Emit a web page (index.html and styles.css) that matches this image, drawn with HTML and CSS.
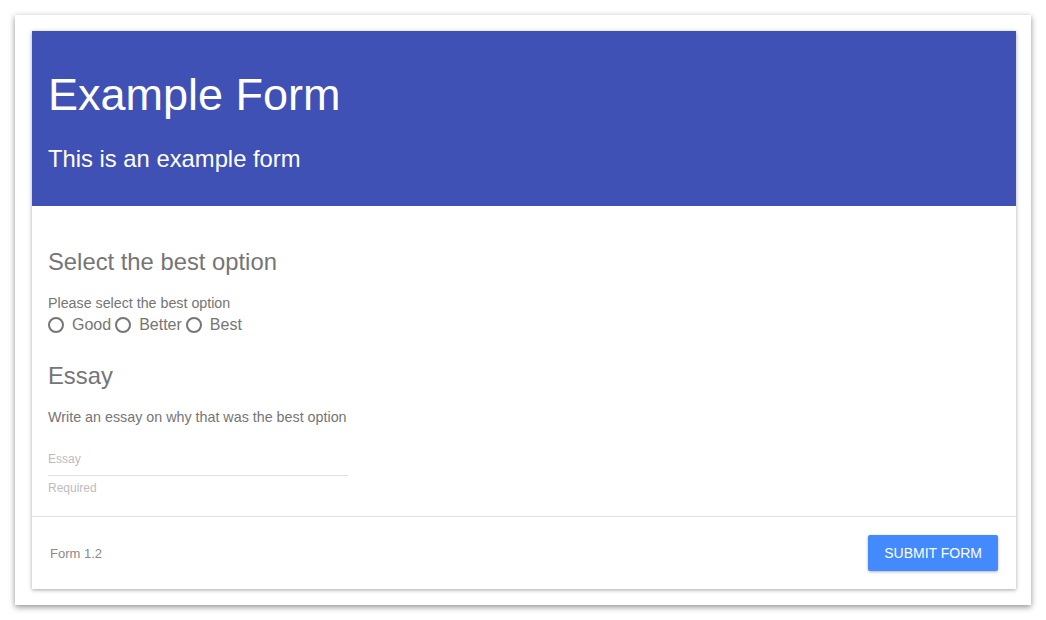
FILE: index.html
```html
<!DOCTYPE html>
<html>
<head>
<meta charset="utf-8">
<link rel="stylesheet" href="styles.css">
</head>
<body>
<div class="frame">
  <div class="card">
    <header class="head">
      <h1 class="title">Example Form</h1>
      <p class="subtitle">This is an example form</p>
    </header>
    <main class="body">
      <section class="sec">
        <h2 class="sec-title">Select the best option</h2>
        <div class="label">Please select the best option</div>
        <div class="radios">
          <label class="radio"><span class="dot"></span>Good</label>
          <label class="radio"><span class="dot"></span>Better</label>
          <label class="radio"><span class="dot"></span>Best</label>
        </div>
      </section>
      <section class="sec">
        <h2 class="sec-title">Essay</h2>
        <div class="desc">Write an essay on why that was the best option</div>
        <div class="field">
          <div class="placeholder">Essay</div>
          <div class="hint">Required</div>
        </div>
      </section>
    </main>
    <footer class="foot">
      <span class="version">Form 1.2</span>
      <button class="btn">Submit Form</button>
    </footer>
  </div>
</div>
</body>
</html>
```
FILE: styles.css
```css
html, body { margin: 0; padding: 0; background: #fff; }
body { font-family: "Liberation Sans", Arial, sans-serif; }
.frame {
  margin: 15px;
  width: 984px;
  padding: 16px 15px 16px 17px;
  background: #fff;
  box-shadow: 0 2px 6px rgba(0,0,0,0.45);
}
.card {
  background: #fff;
  box-shadow: 0 1px 4px rgba(0,0,0,0.35);
}
.head {
  background: #3f51b5;
  color: #fff;
  height: 175px;
  padding: 0 16px;
  box-sizing: border-box;
  overflow: hidden;
}
.title {
  margin: 0;
  padding-top: 38px;
  font-size: 45px;
  font-weight: 400;
  line-height: 52px;
}
.subtitle {
  margin: 22px 0 0;
  font-size: 23.8px;
  line-height: 32px;
}
.body { padding: 40px 16px 20px; color: #757575; }
.sec-title {
  margin: 0;
  font-size: 23.8px;
  font-weight: 400;
  line-height: 32px;
}
.label { margin-top: 17px; font-size: 14.25px; line-height: 16px; }
.radios { display: flex; margin-top: 4px; font-size: 16px; line-height: 20px; margin-bottom: 25px; }
.radio { display: flex; align-items: center; margin-right: 4px; }
.dot {
  width: 12px; height: 12px;
  border: 2px solid #757575;
  border-radius: 50%;
  margin: 0 8px 0 0;
}
.desc { margin-top: 15px; font-size: 14.3px; line-height: 20px; }
.field { width: 300px; margin-top: 24px; }
.placeholder {
  font-size: 12px;
  color: #bdbdbd;
  line-height: 16px;
  padding-bottom: 8px;
  border-bottom: 1px solid #e0e0e0;
}
.hint { font-size: 12px; color: #bdbdbd; line-height: 16px; margin-top: 4px; }
.foot {
  border-top: 1px solid #e0e0e0;
  display: flex;
  justify-content: space-between;
  align-items: center;
  padding: 18px 18px 18px 18px;
}
.version { font-size: 13px; color: #8a8a8a; }
.btn {
  background: #448aff;
  color: #fff;
  border: 0;
  border-radius: 2px;
  height: 36px;
  padding: 0 16px;
  font-family: "Liberation Sans", Arial, sans-serif;
  font-size: 14px;
  text-transform: uppercase;
  box-shadow: 0 1px 3px rgba(0,0,0,0.3);
}
```
